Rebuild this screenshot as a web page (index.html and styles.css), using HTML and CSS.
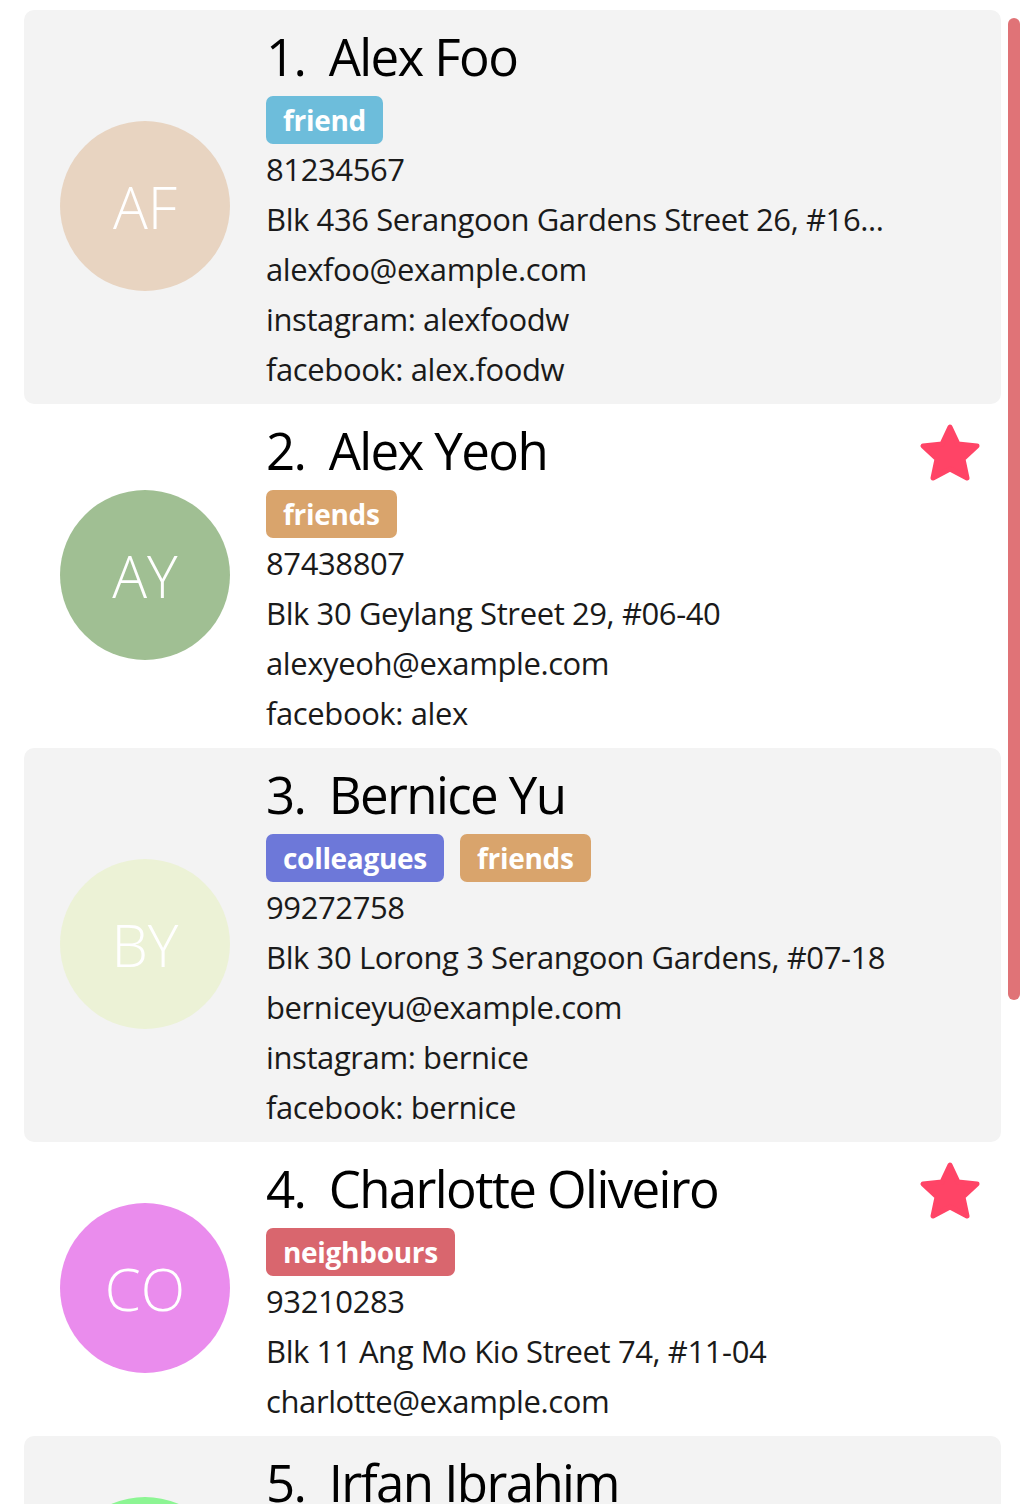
FILE: index.html
```html
<!DOCTYPE html>
<html>
<head>
<meta charset="utf-8">
<link rel="stylesheet" href="styles.css">
</head>
<body>
<div class="list">
  <div class="card alt">
    <div class="avatar" style="background:#e8d4c1">AF</div>
    <div class="info">
      <div class="name">1.  Alex Foo</div>
      <div class="tags"><span class="tag" style="background:#6dbddb">friend</span></div>
      <div class="line">81234567</div>
      <div class="line">Blk 436 Serangoon Gardens Street 26, #16...</div>
      <div class="line">alexfoo@example.com</div>
      <div class="line">instagram: alexfoodw</div>
      <div class="line">facebook: alex.foodw</div>
    </div>
  </div>
  <div class="card">
    <div class="avatar" style="background:#a0bf93">AY</div>
    <div class="info">
      <div class="name">2.  Alex Yeoh</div>
      <div class="tags"><span class="tag" style="background:#d9a46c">friends</span></div>
      <div class="line">87438807</div>
      <div class="line">Blk 30 Geylang Street 29, #06-40</div>
      <div class="line">alexyeoh@example.com</div>
      <div class="line">facebook: alex</div>
    </div>
    <svg class="star" viewBox="0 0 62 60"><polygon points="31,4 39,21 58,23 44,36 48,55 31,46 14,55 18,36 4,23 23,21" fill="#ff4466" stroke="#ff4466" stroke-width="5" stroke-linejoin="round"/></svg>
  </div>
  <div class="card alt">
    <div class="avatar" style="background:#ecf2d6">BY</div>
    <div class="info">
      <div class="name">3.  Bernice Yu</div>
      <div class="tags"><span class="tag" style="background:#6d78d9">colleagues</span><span class="tag" style="background:#d9a46c">friends</span></div>
      <div class="line">99272758</div>
      <div class="line">Blk 30 Lorong 3 Serangoon Gardens, #07-18</div>
      <div class="line">berniceyu@example.com</div>
      <div class="line">instagram: bernice</div>
      <div class="line">facebook: bernice</div>
    </div>
  </div>
  <div class="card">
    <div class="avatar" style="background:#ea8ced">CO</div>
    <div class="info">
      <div class="name">4.  Charlotte Oliveiro</div>
      <div class="tags"><span class="tag" style="background:#d9666e">neighbours</span></div>
      <div class="line">93210283</div>
      <div class="line">Blk 11 Ang Mo Kio Street 74, #11-04</div>
      <div class="line">charlotte@example.com</div>
    </div>
    <svg class="star" viewBox="0 0 62 60"><polygon points="31,4 39,21 58,23 44,36 48,55 31,46 14,55 18,36 4,23 23,21" fill="#ff4466" stroke="#ff4466" stroke-width="5" stroke-linejoin="round"/></svg>
  </div>
  <div class="card alt">
    <div class="avatar" style="background:#8cf593">II</div>
    <div class="info">
      <div class="name">5.  Irfan Ibrahim</div>
      <div class="tags"><span class="tag" style="background:#6d78d9">classmates</span></div>
      <div class="line">92492021</div>
      <div class="line">Blk 47 Tampines Street 20, #17-35</div>
      <div class="line">irfan@example.com</div>
    </div>
  </div>
</div>
<div class="scrollbar"></div>
</body>
</html>
```
FILE: styles.css
```css
html, body {
  margin: 0;
  padding: 0;
  background: #ffffff;
  height: 1504px;
  overflow: hidden;
}
body {
  font-family: "Open Sans", "Noto Sans", sans-serif;
  color: #1a1a1a;
}
.list {
  padding: 10px 35px 0 24px;
  display: flex;
  flex-direction: column;
}
.card {
  position: relative;
  display: flex;
  align-items: center;
  padding: 8px 0 10px 36px;
  border-radius: 10px;
  background: #ffffff;
}
.card.alt {
  background: #f3f3f3;
}
.avatar {
  width: 170px;
  height: 170px;
  flex: 0 0 170px;
  border-radius: 50%;
  color: #ffffff;
  font-weight: 300;
  font-size: 58px;
  display: flex;
  align-items: center;
  justify-content: center;
  margin-right: 36px;
}
.info {
  display: flex;
  flex-direction: column;
  min-width: 0;
}
.name {
  font-size: 51px;
  line-height: 76px;
  color: #000;
  white-space: pre;
  letter-spacing: -1.6px;
}
.tags {
  display: flex;
  gap: 16px;
  margin-top: 2px;
}
.tag {
  height: 48px;
  line-height: 48px;
  padding: 0 17px;
  border-radius: 7px;
  color: #fff;
  font-weight: 700;
  font-size: 28px;
  letter-spacing: -0.3px;
}
.line {
  font-size: 31px;
  line-height: 50px;
  white-space: nowrap;
  letter-spacing: -0.4px;
}
.star {
  position: absolute;
  right: 20px;
  top: 19px;
  width: 62px;
  height: 60px;
}
.scrollbar {
  position: fixed;
  left: 1008px;
  top: 18px;
  width: 12px;
  height: 982px;
  border-radius: 6px;
  background: #e07377;
}
```
